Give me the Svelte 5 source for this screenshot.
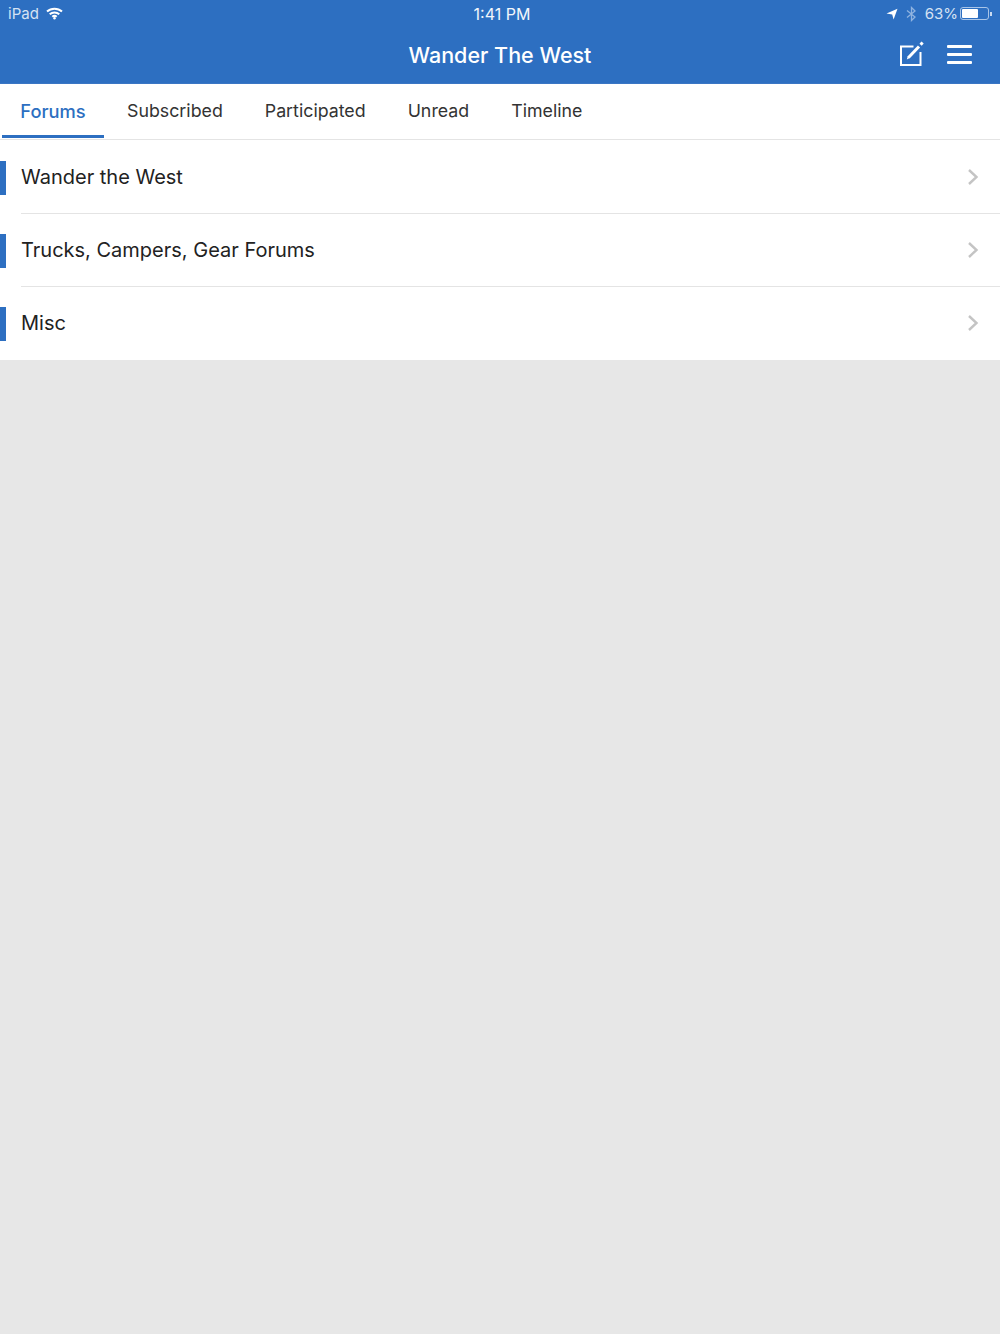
<script lang="ts">
	const tabs = ['Forums', 'Subscribed', 'Participated', 'Unread', 'Timeline'];
	const forums = ['Wander the West', 'Trucks, Campers, Gear Forums', 'Misc'];
</script>

<div class="page">
	<header class="header">
		<div class="status">
			<div class="status-left">
				<span>iPad</span>
				<svg class="wifi" width="17" height="13" viewBox="0 0 17 13">
					<path d="M1 4.6 A11 11 0 0 1 16 4.6" />
					<path d="M3.7 7.3 A7.2 7.2 0 0 1 13.3 7.3" />
					<path d="M6.3 9.8 A3.4 3.4 0 0 1 10.7 9.8" />
					<circle cx="8.5" cy="11.3" r="1.2" />
				</svg>
			</div>
			<div class="status-time">1:41 PM</div>
			<div class="status-right">
				<svg width="12" height="12" viewBox="0 0 12 12">
					<path class="solid" d="M0.5 5.6 L11.5 0.8 L7.6 11.5 L6.2 6.6 Z" />
				</svg>
				<svg class="bt" width="11" height="16" viewBox="0 0 11 16">
					<path d="M1 4.5 L9 11 L5.5 14.5 V1.5 L9 5 L1 11.5" />
				</svg>
				<span class="pct">63%</span>
				<div class="battery"><div class="battery-fill"></div></div>
				<div class="battery-tip"></div>
			</div>
		</div>
		<div class="navbar">
			<h1>Wander The West</h1>
			<div class="actions">
				<svg width="26" height="26" viewBox="0 0 26 26">
					<path class="outline" d="M14.5 5.5 H2 V24 H21.5 V11" />
					<path class="pen" d="M9.5 16.5 L20 5.5" />
					<path class="solid" d="M7.8 18.5 L8.8 15 L10.8 17 Z" />
					<path class="pen" d="M21.6 3.8 L23.6 1.6" />
				</svg>
				<div class="menu"><span></span><span></span><span></span></div>
			</div>
		</div>
	</header>

	<nav class="tabs">
		{#each tabs as tab, i}
			<div class="tab" class:active={i === 0}>{tab}</div>
		{/each}
	</nav>

	<ul class="list">
		{#each forums as forum}
			<li class="row">
				<div class="marker"></div>
				<div class="row-body">
					<span>{forum}</span>
					<svg width="12" height="18" viewBox="0 0 12 18">
						<path d="M2 2 L9.5 9 L2 16" />
					</svg>
				</div>
			</li>
		{/each}
	</ul>
</div>

<style>
	:global(body) {
		background: #e7e7e7;
	}

	.page {
		min-height: 1334px;
		background: #e7e7e7;
		font-family: Inter, Roboto, sans-serif;
	}

	.header {
		height: 84px;
		background: #2d6fc1;
		color: #fff;
		box-sizing: border-box;
		border-bottom: 1px solid #3a76c4;
	}

	.status {
		height: 27px;
		display: grid;
		grid-template-columns: 1fr auto 1fr;
		align-items: center;
		padding: 0 8px;
		font-size: 15px;
		color: #d5e2f3;
	}

	.status-left {
		display: flex;
		align-items: center;
		gap: 7px;
	}

	.status-time {
		font-size: 16px;
		color: #f2f6fb;
		padding-left: 4px;
	}

	.status-right {
		display: flex;
		align-items: center;
		justify-content: flex-end;
	}

	.wifi path {
		fill: none;
		stroke: #fff;
		stroke-width: 2;
	}

	.wifi circle,
	.solid {
		fill: #fff;
	}

	.bt {
		margin-left: 8px;
	}

	.bt path {
		fill: none;
		stroke: #8fb3e0;
		stroke-width: 1.3;
	}

	.pct {
		margin-left: 8px;
	}

	.battery {
		margin-left: 2px;
		width: 29px;
		height: 13px;
		box-sizing: border-box;
		border: 1px solid #a9c5e8;
		border-radius: 3px;
		padding: 1px;
	}

	.battery-fill {
		width: 63%;
		height: 100%;
		background: #fff;
		border-radius: 1px;
	}

	.battery-tip {
		width: 2px;
		height: 4px;
		margin-left: 1px;
		background: #c9daf0;
	}

	.navbar {
		height: 56px;
		position: relative;
		display: flex;
		align-items: center;
		justify-content: center;
	}

	h1 {
		margin: 0;
		font-size: 21.5px;
		font-weight: 500;
	}

	.actions {
		position: absolute;
		right: 28px;
		top: 14px;
		display: flex;
		align-items: center;
		gap: 22px;
	}

	.outline,
	.pen {
		fill: none;
		stroke: #fff;
	}

	.outline {
		stroke-width: 2;
	}

	.pen {
		stroke-width: 3;
	}

	.menu {
		width: 25px;
		display: flex;
		flex-direction: column;
		gap: 5px;
	}

	.menu span {
		height: 3px;
		background: #fff;
		border-radius: 1px;
	}

	.tabs {
		height: 57px;
		box-sizing: border-box;
		display: flex;
		background: #fff;
		border-bottom: 2px solid #e4e4e4;
		padding-left: 2px;
		font-size: 17.8px;
		line-height: 22px;
		color: #333;
	}

	.tab {
		padding: 16px 0 0;
		height: 54px;
		box-sizing: border-box;
		margin-right: 42px;
	}

	.tab.active {
		width: 102px;
		margin-right: 23px;
		text-align: center;
		font-size: 18.3px;
		color: #2d6fc1;
		font-weight: 500;
		border-bottom: 3px solid #2d6fc1;
	}

	.list {
		margin: 0;
		padding: 0;
		list-style: none;
		background: #fff;
		margin-top: -1px;
		padding-top: 1px;
	}

	.row {
		height: 73px;
		display: flex;
		align-items: center;
		gap: 15px;
	}

	.marker {
		width: 6px;
		height: 34px;
		flex: none;
		background: #2d6fc1;
	}

	.row-body {
		flex: 1;
		height: 100%;
		box-sizing: border-box;
		display: flex;
		align-items: center;
		justify-content: space-between;
		padding-right: 21px;
		font-size: 20px;
		color: #222;
		border-bottom: 1px solid #e4e4e4;
	}

	.row:last-child .row-body {
		border-bottom-color: transparent;
	}

	.row-body path {
		fill: none;
		stroke: #c4c4c4;
		stroke-width: 2.4;
	}
</style>
